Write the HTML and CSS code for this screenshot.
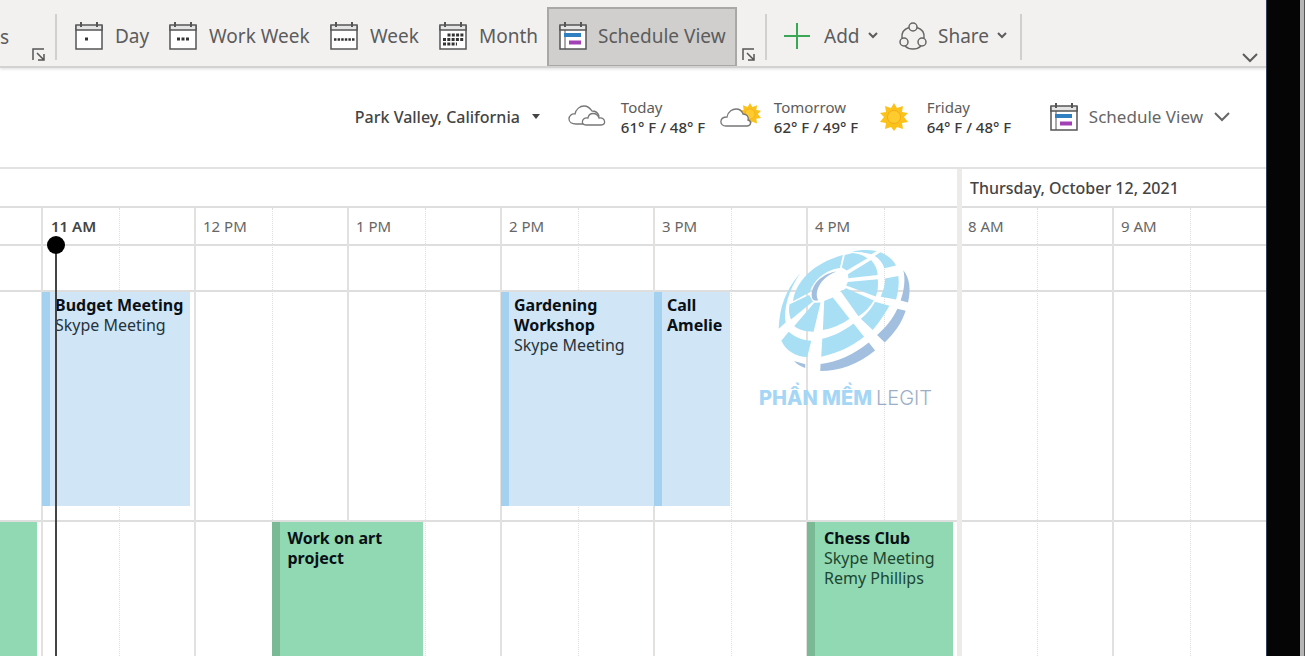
FILE: index.html
```html
<!DOCTYPE html>
<html lang="en">
<head>
<meta charset="utf-8">
<title>Calendar</title>
<link rel="stylesheet" href="styles.css">
</head>
<body>
<svg class="defs" aria-hidden="true">
  <symbol id="cal" viewBox="0 0 28 28">
    <path d="M1 4h26v23H1z" fill="#fff" stroke="#555" stroke-width="1.5"/>
    <path d="M1 3h26v5H1z" fill="#e4e4e4" stroke="#555" stroke-width="1.5"/>
    <path d="M6 0v5M22 0v5" stroke="#555" stroke-width="2"/>
  </symbol>
  <symbol id="sched" viewBox="0 0 28 28">
    <use href="#cal"/>
    <path d="M6 8v19" stroke="#555"/>
    <path d="M5 11h17v4H5z" fill="#2f7fc1"/>
    <path d="M10 18.500h12v4H10z" fill="#a240b5"/>
  </symbol>
  <symbol id="launch" viewBox="0 0 14 14">
    <path d="M1 12V1h11M5 5l7 7M12 6v6H6" fill="none" stroke="#555" stroke-width="1.5"/>
  </symbol>
  <symbol id="chev" viewBox="0 0 16 10">
    <path d="M1 1l7 7 7-7" fill="none" stroke="currentColor" stroke-width="2"/>
  </symbol>
  <symbol id="chevbold" viewBox="0 0 10 7">
    <path d="M1 1l4 4 4-4" fill="none" stroke="currentColor" stroke-width="2"/>
  </symbol>
  <symbol id="sun" viewBox="0 0 28 28">
    <path d="M14 0l3 5 6-2-1 6 6 1-4 4 4 5-6 1 1 6-6-2-3 4-3-4-6 2 1-6-6-1 4-5-4-4 6-1-1-6 6 2z" fill="#fbc21b"/>
    <circle cx="14" cy="14" r="6.500" fill="#ffcb2e" stroke="#f3ad1b"/>
  </symbol>
</svg>

<main class="app">
  <header class="ribbon">
    <span class="cut">s</span>
    <button class="launcher" aria-label="More options"><svg><use href="#launch"/></svg></button>
    <span class="sep"></span>
    <nav class="views">
      <button class="view day"><svg class="ico" viewBox="0 0 28 28"><use href="#cal"/><path d="M10 15.500h3v3h-3z" fill="#333"/></svg>Day</button>
      <button class="view work"><svg class="ico" viewBox="0 0 28 28"><use href="#cal"/><path d="M8 17h12" stroke="#333" stroke-width="3" stroke-dasharray="3 1.500"/></svg>Work Week</button>
      <button class="view week"><svg class="ico" viewBox="0 0 28 28"><use href="#cal"/><path d="M4 17.500h21" stroke="#333" stroke-width="2.500" stroke-dasharray="2.500 1.100"/></svg>Week</button>
      <button class="view month"><svg class="ico" viewBox="0 0 28 28"><use href="#cal"/><path d="M8.500 13h17M4 17.500h21M4 22h14" stroke="#333" stroke-width="3" stroke-dasharray="3 1.300"/></svg>Month</button>
      <button class="view active"><svg class="ico"><use href="#sched"/></svg>Schedule View</button>
    </nav>
    <button class="launcher" aria-label="View options"><svg><use href="#launch"/></svg></button>
    <span class="sep"></span>
    <button class="action add"><svg class="plus" viewBox="0 0 26 26"><path d="M13 0v26M0 13h26" stroke="#3aa757" stroke-width="2"/></svg>Add<svg class="mini"><use href="#chevbold"/></svg></button>
    <button class="action share"><svg class="ico" viewBox="0 0 28 28"><g fill="none" stroke="#666" stroke-width="1.500"><circle cx="14" cy="5" r="4"/><circle cx="5" cy="20" r="4"/><circle cx="23" cy="20" r="4"/><path d="M10 5.500C5 7 2.500 11 3 16M18 5.500c5 1.500 7.500 5.500 7 10.500M6 24c4 4 12 4 16 0"/></g></svg>Share<svg class="mini"><use href="#chevbold"/></svg></button>
    <span class="sep"></span>
    <button class="collapse" aria-label="Collapse ribbon"><svg><use href="#chev"/></svg></button>
  </header>

  <section class="info">
    <button class="place">Park Valley, California<svg viewBox="0 0 8 5"><path d="M0 0h8L4 5z" fill="#444"/></svg></button>
    <div class="weather">
      <div class="wx">
        <svg viewBox="0 0 42 28"><g fill="#fff" stroke="#777" stroke-width="1.300"><path d="M9 21c-4 0-7-2-7-5s3-6 6-5c1-5 5-8 9-8 4 0 6 2 8 5 3 0 6 2 7 5L22 21z"/><path d="M19 22c-6 0-4-8 2-7 1-6 9-6 11 0 6-1 8 7 2 7z"/></g></svg>
        <p>Today<b>61° F / 48° F</b></p>
      </div>
      <div class="wx wide">
        <svg viewBox="0 0 42 28"><use href="#sun" x="20" y="0" width="22" height="22"/><path d="M7 23c-7 0-7-9 1-9 1-6 6-8 9-8s6 2 7 5c4 0 6 3 5 6 4 1 3 6-1 6z" fill="#fff" stroke="#777" stroke-width="1.300"/></svg>
        <p>Tomorrow<b>62° F / 49° F</b></p>
      </div>
      <div class="wx sunny">
        <svg><use href="#sun"/></svg>
        <p>Friday<b>64° F / 48° F</b></p>
      </div>
    </div>
    <button class="picker"><svg class="ico"><use href="#sched"/></svg>Schedule View<svg class="drop"><use href="#chev"/></svg></button>
  </section>

  <section class="schedule">
    <div class="line r1"></div><div class="line r2"></div><div class="line r3"></div><div class="line r4"></div>
    <div class="hour c2">11 AM</div><div class="half c3"></div>
    <div class="hour c4">12 PM</div><div class="half c5"></div>
    <div class="hour c6">1 PM</div><div class="half c7"></div>
    <div class="hour c8">2 PM</div><div class="half c9"></div>
    <div class="hour c10">3 PM</div><div class="half c11"></div>
    <div class="hour c12">4 PM</div><div class="half c13"></div>
    <div class="hour c14">8 AM</div><div class="half c15"></div>
    <div class="hour c16">9 AM</div><div class="half c17"></div>
    <h2 class="date">Thursday, October 12, 2021</h2>

    <article class="event blue budget"><b>Budget Meeting</b>Skype Meeting</article>
    <article class="event blue garden"><b>Gardening<br>Workshop</b>Skype Meeting</article>
    <article class="event blue call"><b>Call Amelie</b></article>
    <article class="event green earlier"></article>
    <article class="event green art"><b>Work on art project</b></article>
    <article class="event green chess"><b>Chess Club</b>Skype Meeting<br>Remy Phillips</article>
    <div class="now"></div>

    <div class="brand">
      <svg viewBox="80 26 406 370">
        <g fill="#a8dff5">
          <path d="M278 44L269 83C225 88 188 122 179 156L128 183C137 125 185 70 278 44z"/>
          <path d="M150 98C105 150 88 200 85 266L106 247C99 205 115 150 150 98z"/>
          <path d="M118 192L177 164L188 184L122 238C115 220 115 205 118 192z"/>
          <path d="M192 188L211 187L190 275C165 275 145 270 132 258z"/>
          <path d="M222 182L248 172L298 236C275 253 245 265 218 270z"/>
          <path d="M272 154L288 144L371 181C360 200 345 216 325 228z"/>
          <path d="M288 136L293 125L383 117C385 140 382 156 377 169z"/>
          <path d="M294 114L293 102L363 59C375 72 382 88 383 104z"/>
          <path d="M284 44L308 38C325 40 340 45 352 54L290 91L275 82z"/>
          <path d="M305 34C330 28 355 28 380 32L364 42C345 36 325 34 305 34z"/>
          <path d="M391 36C415 45 430 60 438 76L403 84C398 68 388 55 374 47z"/>
          <path d="M405 115L445 107C448 130 445 155 438 178L392 170C400 150 405 135 405 115z"/>
          <path d="M375 185L418 197C405 220 388 246 368 270L332 236C350 222 362 208 375 185z"/>
          <path d="M310 250L342 290C305 320 260 340 213 350L216 296C250 288 282 272 310 250z"/>
          <path d="M115 275C135 292 158 301 183 302L171 351C135 350 105 330 93 302z"/>
        </g>
        <path d="M258 94C215 100 176 138 186 175C195 194 220 186 245 170C275 155 298 130 294 104C290 84 275 86 258 94z" fill="#fff"/>
        <g fill="#a2bfe0">
          <path d="M460 90C480 115 483 150 474 187L452 181C464 145 466 115 460 90z"/>
          <path d="M442 206L467 212C455 250 432 280 404 307L381 285C408 262 428 236 442 206z"/>
          <path d="M356 307L375 331C325 372 268 393 210 393L211 372C262 365 312 343 356 307z"/>
          <path d="M131 363L165 373V384C152 380 140 373 131 363z"/>
          <path d="M258 94C215 100 176 138 186 175C190 182 197 182 204 180C192 160 205 115 258 94z"/>
        </g>
      </svg>
      <p><b>PHẦN MỀM</b><span>LEGIT</span></p>
    </div>
  </section>
</main>
<div class="bezel"></div>
</body>
</html>
```
FILE: styles.css
```css
* { box-sizing: border-box; }
body {
  margin: 0;
  display: flex;
  min-height: 100vh;
  font-family: "Noto Sans", "Open Sans", sans-serif;
  color: #5c5c5c;
  background: #fff;
  overflow-x: hidden;
}
p, h2 { margin: 0; }
svg { display: block; flex: none; }
button {
  font: inherit;
  color: inherit;
  background: none;
  border: 0;
  padding: 0;
  display: flex;
  align-items: center;
}
.defs { position: absolute; width: 0; height: 0; }
.app { flex: 1; min-width: 0; display: flex; flex-direction: column; }
.bezel {
  width: 39px;
  background: linear-gradient(to left, #555 1px, #b5b5b5 1px, #b5b5b5 5px, #050505 5px);
  border-left: 1px solid #34405a;
}
.ico { width: 28px; height: 28px; }

/* Ribbon */
.ribbon {
  display: flex;
  align-items: center;
  height: 68px;
  background: #f2f1f0;
  border-bottom: 2px solid #d4d2d0;
  box-shadow: 0 1px 3px #ddd;
  padding-top: 7px;
  font-size: 19px;
  white-space: nowrap;
}
.cut { width: 32px; }
.launcher { align-self: flex-end; width: 23px; padding-bottom: 4px; }
.launcher svg { width: 14px; height: 14px; }
.sep { width: 2px; height: 46px; background: #d2d0ce; }
.views { display: flex; align-self: stretch; padding-left: 18px; margin-right: 5px; }
.view { gap: 12px; padding-bottom: 2px; }
.day { width: 94px; }
.work { width: 161px; }
.week { width: 109px; }
.month { width: 108px; }
.active { width: 190px; padding: 0 0 2px 10px; gap: 11px; background: #d0cfce; border: 2px solid #aaa8a7; border-bottom-width: 1px; }
.action { gap: 8px; padding-bottom: 2px; }
.add { padding-left: 17px; width: 132px; }
.plus { width: 26px; height: 26px; margin-right: 6px; }
.mini { width: 10px; height: 7px; }
.share { width: 121px; }
.share .ico { margin-right: 3px; }
.collapse { margin: auto 8px 3px auto; }
.collapse svg { width: 16px; height: 10px; }

/* Location and weather */
.info {
  display: flex;
  align-items: center;
  justify-content: flex-end;
  height: 99px;
  padding: 0 36px 2px 0;
  font-size: 16px;
  white-space: nowrap;
}
.place { gap: 12px; margin-right: 27px; font-weight: 500; color: #444; }
.place svg { width: 8px; height: 5px; }
.weather { display: flex; font-size: 15px; line-height: 20px; }
.wx { display: flex; align-items: center; gap: 12px; width: 152px; }
.wx svg { width: 42px; height: 28px; }
.wx b { display: block; font-weight: 500; color: #3a3a3a; }
.wide { width: 161px; gap: 13px; }
.sunny { width: 170px; gap: 19px; }
.sunny svg { width: 28px; height: 28px; }
.picker { gap: 11px; font-size: 17px; color: #666; }
.drop { width: 16px; height: 10px; }

/* Schedule grid: a part column, then sixteen half hours */
.schedule {
  flex: 1;
  position: relative;
  display: grid;
  grid-template-columns: 42px repeat(16, minmax(0, 1fr));
  grid-template-rows: 39px 38px 46px 230px minmax(134px, 1fr);
  border-top: 2px solid #e2e2e2;
  font-size: 15px;
}
.line { grid-column: 1 / -1; border-bottom: 2px solid #dfdede; }
.r1 { grid-row: 1; }
.r2 { grid-row: 2; }
.r3 { grid-row: 3; }
.r4 { grid-row: 4; }
.hour {
  grid-row: 2 / -1;
  border-left: 2px solid #e2e1e0;
  margin-left: -1px;
  padding: 8px 0 0 7px;
  line-height: 20px;
  color: #666;
}
.half { grid-row: 2 / -1; border-left: 1px dotted #dedede; }
.c2 { grid-column: 2; font-weight: 600; color: #444; padding-left: 8px; }
.c3 { grid-column: 3; }
.c4 { grid-column: 4; }
.c5 { grid-column: 5; }
.c6 { grid-column: 6; }
.c7 { grid-column: 7; }
.c8 { grid-column: 8; }
.c9 { grid-column: 9; }
.c10 { grid-column: 10; }
.c11 { grid-column: 11; }
.c12 { grid-column: 12; }
.c13 { grid-column: 13; }
.c14 { grid-column: 14; grid-row: 1 / -1; border-left: 5px solid #ecebea; margin-left: -3px; padding: 47px 0 0 6px; }
.c15 { grid-column: 15; }
.c16 { grid-column: 16; }
.c17 { grid-column: 17; }
.date {
  grid-area: 1 / 14 / 2 / -1;
  padding: 8px 0 0 10px;
  font-size: 16px;
  line-height: 22px;
  font-weight: 500;
  color: #444;
}

.event { line-height: 20px; font-size: 16px; color: #26333c; overflow: hidden; }
.event b { display: block; color: #0a1016; }
.blue { background: #d0e6f6; border-left: 8px solid #a5d1f0; margin: 0 0 16px; grid-row: 4; padding: 3px 0 0 5px; }
.green { background: #90d9b3; border-left: 8px solid #79b994; grid-row: 5; padding: 6px 8px; color: #1c4632; }
.budget { grid-column: 2 / 4; margin-right: 5px; }
.garden { grid-column: 8 / 10; }
.call { grid-column: 10; margin-right: 1px; }
.earlier { grid-column: 1; border-left: 0; margin-right: 5px; }
.art { grid-column: 5 / 7; margin-right: 2px; }
.chess { grid-column: 12 / 14; margin-right: 7px; padding-left: 9px; }

/* Current time marker */
.now {
  position: absolute;
  left: 55px;
  top: 76px;
  bottom: 0;
  width: 2px;
  background: #444;
}
.now::before {
  content: "";
  position: absolute;
  left: -8px;
  top: -9px;
  width: 18px;
  height: 18px;
  border-radius: 50%;
  background: #000;
}

/* Brand mark laid over the grid */
.brand { position: absolute; left: 759px; top: 80px; width: 175px; }
.brand svg { width: 135px; height: 123px; margin-left: 18px; }
.brand p { display: flex; gap: 4px; margin-top: 13px; font: 300 20px/26px Inter, sans-serif; color: #9aaec6; }
.brand b { font-weight: 800; color: #a5d6f5; }
```
